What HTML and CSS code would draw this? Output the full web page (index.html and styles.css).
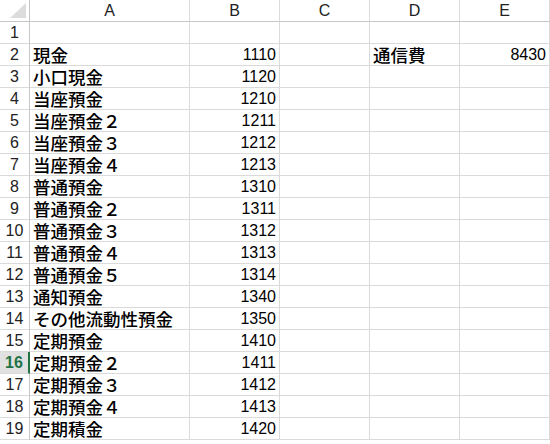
FILE: index.html
```html
<!DOCTYPE html>
<html lang="ja">
<head>
<meta charset="utf-8">
<link rel="stylesheet" href="styles.css">
</head>
<body>
<div class="sheet">
  <div class="corner"><svg width="16" height="15" viewBox="0 0 16 15"><polygon points="16,0 16,15 0,15" fill="#dcdcdc"/></svg></div>
  <div class="colh">A</div><div class="colh">B</div><div class="colh">C</div><div class="colh">D</div><div class="colh">E</div>

  <div class="rowh">1</div><div class="c"></div><div class="c"></div><div class="c"></div><div class="c"></div><div class="c"></div>
  <div class="rowh">2</div><div class="c jp">現金</div><div class="c num">1110</div><div class="c"></div><div class="c jp">通信費</div><div class="c num">8430</div>
  <div class="rowh">3</div><div class="c jp">小口現金</div><div class="c num">1120</div><div class="c"></div><div class="c"></div><div class="c"></div>
  <div class="rowh">4</div><div class="c jp">当座預金</div><div class="c num">1210</div><div class="c"></div><div class="c"></div><div class="c"></div>
  <div class="rowh">5</div><div class="c jp">当座預金２</div><div class="c num">1211</div><div class="c"></div><div class="c"></div><div class="c"></div>
  <div class="rowh">6</div><div class="c jp">当座預金３</div><div class="c num">1212</div><div class="c"></div><div class="c"></div><div class="c"></div>
  <div class="rowh">7</div><div class="c jp">当座預金４</div><div class="c num">1213</div><div class="c"></div><div class="c"></div><div class="c"></div>
  <div class="rowh">8</div><div class="c jp">普通預金</div><div class="c num">1310</div><div class="c"></div><div class="c"></div><div class="c"></div>
  <div class="rowh">9</div><div class="c jp">普通預金２</div><div class="c num">1311</div><div class="c"></div><div class="c"></div><div class="c"></div>
  <div class="rowh">10</div><div class="c jp">普通預金３</div><div class="c num">1312</div><div class="c"></div><div class="c"></div><div class="c"></div>
  <div class="rowh">11</div><div class="c jp">普通預金４</div><div class="c num">1313</div><div class="c"></div><div class="c"></div><div class="c"></div>
  <div class="rowh">12</div><div class="c jp">普通預金５</div><div class="c num">1314</div><div class="c"></div><div class="c"></div><div class="c"></div>
  <div class="rowh">13</div><div class="c jp">通知預金</div><div class="c num">1340</div><div class="c"></div><div class="c"></div><div class="c"></div>
  <div class="rowh">14</div><div class="c jp">その他流動性預金</div><div class="c num">1350</div><div class="c"></div><div class="c"></div><div class="c"></div>
  <div class="rowh">15</div><div class="c jp">定期預金</div><div class="c num">1410</div><div class="c"></div><div class="c"></div><div class="c"></div>
  <div class="rowh sel">16</div><div class="c jp">定期預金２</div><div class="c num">1411</div><div class="c"></div><div class="c"></div><div class="c"></div>
  <div class="rowh">17</div><div class="c jp">定期預金３</div><div class="c num">1412</div><div class="c"></div><div class="c"></div><div class="c"></div>
  <div class="rowh">18</div><div class="c jp">定期預金４</div><div class="c num">1413</div><div class="c"></div><div class="c"></div><div class="c"></div>
  <div class="rowh">19</div><div class="c jp">定期積金</div><div class="c num">1420</div><div class="c"></div><div class="c"></div><div class="c"></div>
</div>
</body>
</html>
```
FILE: styles.css
```css
html, body {
  margin: 0;
  padding: 0;
  background: #ffffff;
}
.sheet {
  display: grid;
  grid-template-columns: 30px 160px 90px 90px 90px 90px;
  grid-template-rows: 22px repeat(19, 22px);
  font-family: "Liberation Sans", "Noto Sans CJK JP", sans-serif;
  color: #000;
}
.sheet > div {
  box-sizing: border-box;
  border-right: 1px solid #dadada;
  border-bottom: 1px solid #dadada;
  white-space: nowrap;
}
.corner {
  display: flex;
  align-items: flex-end;
  justify-content: flex-end;
  padding: 0 3px 3px 0;
  border-bottom-color: #c6c6c6 !important;
  border-right-color: #c6c6c6 !important;
}
.colh {
  display: flex;
  align-items: flex-end;
  justify-content: center;
  font-size: 16px;
  line-height: 18px;
  padding-bottom: 1px;
  color: #222;
  border-bottom-color: #c6c6c6 !important;
}
.rowh {
  display: flex;
  align-items: flex-end;
  justify-content: center;
  font-size: 16px;
  line-height: 18px;
  padding-bottom: 1px;
  color: #222;
  border-right-color: #c6c6c6 !important;
}
.rowh.sel {
  background: #e1e1e1;
  color: #217346;
  font-weight: bold;
  border-right: 2px solid #217346 !important;
}
.c {
  display: flex;
  align-items: flex-end;
  font-size: 16px;
  line-height: 18px;
  padding-bottom: 1px;
}
.jp {
  font-family: "Noto Sans CJK JP", sans-serif;
  font-size: 17.5px;
  font-weight: 500;
  padding-left: 3px;
  line-height: 18px;
  padding-bottom: 1px;
}
.num {
  justify-content: flex-end;
  padding-right: 3px;
}
```
